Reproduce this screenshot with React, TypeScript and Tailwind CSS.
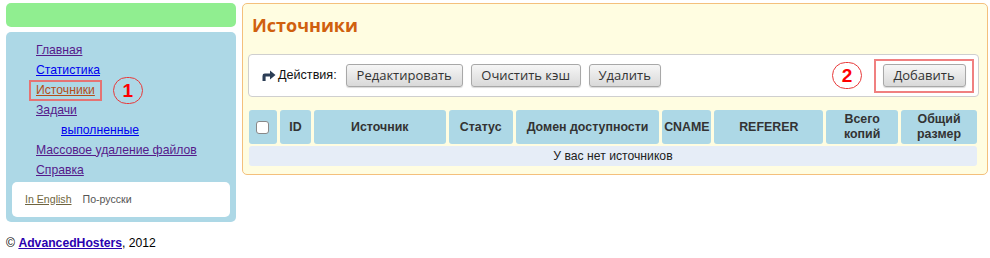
import React from "react";

const sideLinks = [
  { name: "Главная", color: "text-[#551a8b]", indent: false },
  { name: "Статистика", color: "text-[#0000ee]", indent: false },
  { name: "Источники", color: "text-[#b34d1a]", indent: false, current: true },
  { name: "Задачи", color: "text-[#551a8b]", indent: false },
  { name: "выполненные", color: "text-[#0000ee]", indent: true },
  { name: "Массовое удаление файлов", color: "text-[#551a8b]", indent: false },
  { name: "Справка", color: "text-[#551a8b]", indent: false },
];

const columns = [
  { name: "", w: "w-[28px]" },
  { name: "ID", w: "w-[31px]" },
  { name: "Источник", w: "w-[132px]" },
  { name: "Статус", w: "w-[64px]" },
  { name: "Домен доступности", w: "w-[144px]" },
  { name: "CNAME", w: "w-[49px]" },
  { name: "REFERER", w: "w-[109px]" },
  { name: "Всего копий", w: "w-[72px]" },
  { name: "Общий размер", w: "w-[76px]" },
];

const Mark = ({ n }: { n: string }) => (
  <span className="inline-flex h-[27px] w-[30px] items-center justify-center rounded-full border-[1.5px] border-[#e83a3a] text-[19px] font-bold leading-none text-[#ff0000] font-['Liberation_Sans',sans-serif]">
    {n}
  </span>
);

const Btn = ({ label, w }: { label: string; w: string }) => (
  <button
    className={`${w} h-[23px] rounded-[3px] border border-[#a8a8a8] bg-gradient-to-b from-[#f6f6f6] to-[#d9d9d9] text-[13px] leading-none text-[#333] shadow-[0_1px_1px_rgba(0,0,0,0.15)] font-['Open_Sans',sans-serif]`}
  >
    {label}
  </button>
);

const App = () => {
  return (
    <div className="h-[258px] w-[990px] bg-white font-['Liberation_Sans',Arial,sans-serif] text-[13px] text-black">
      <div className="flex gap-[6px] pl-[6px] pt-[3px]">
        {/* sidebar */}
        <div className="flex w-[230px] flex-col gap-[5px]">
          <div className="h-[24px] rounded-[5px] bg-[#90ee90]" />
          <div className="flex h-[190px] flex-col rounded-[5px] bg-[#add8e6] pb-[5px] pt-[8px]">
            <ul className="flex flex-col text-[12.2px]">
              {sideLinks.map((l) => (
                <li
                  key={l.name}
                  className={`flex h-[20px] items-center ${l.indent ? "pl-[55px]" : "pl-[30px]"}`}
                >
                  {l.current ? (
                    <>
                      <span className="-ml-[7px] inline-flex h-[21px] items-center border-2 border-[#e57373] px-[5px]">
                        <a href="#" className={`${l.color} underline`}>
                          {l.name}
                        </a>
                      </span>
                      <span className="ml-[11px]">
                        <Mark n="1" />
                      </span>
                    </>
                  ) : (
                    <a href="#" className={`${l.color} underline`}>
                      {l.name}
                    </a>
                  )}
                </li>
              ))}
            </ul>
            <div className="mx-[6px] mt-auto flex h-[35px] items-center gap-[11px] rounded-[5px] bg-white pl-[13px] text-[10.6px]">
              <a href="#" className="text-[#6f6540] underline">
                In English
              </a>
              <span className="text-[#555]">По-русски</span>
            </div>
          </div>
          <div className="mt-[7px] text-[12.2px]">
            ©{" "}
            <a href="#" className="font-bold text-[#2a00b0] underline">
              AdvancedHosters
            </a>
            , 2012
          </div>
        </div>

        {/* main */}
        <div className="flex h-[172px] w-[746px] flex-col rounded-[5px] border border-[#f4c07c] bg-[#fffde1] px-[5px] pt-[9px]">
          <h1 className="h-[24px] pl-[4px] text-[18px] font-bold leading-[24px] text-[#d0600e] font-['Open_Sans',sans-serif]">
            Источники
          </h1>
          <div className="mt-[17px] flex h-[43px] w-[731px] items-center rounded-[4px] border border-[#cfcfcf] bg-white pl-[13px] pr-[4px]">
            <svg width="14" height="11" viewBox="0 0 14 11" className="mr-[2px]">
              <path
                d="M0.5 11 V6 Q0.5 3.6 2.8 3.6 H8 V0.5 L13.5 5 L8 9.5 V6.6 H3.6 V11 Z"
                fill="#2b3d55"
              />
            </svg>
            <span className="text-[12.6px] text-[#111]">Действия:</span>
            <div className="ml-[9px] flex gap-[8px]">
              <Btn label="Редактировать" w="w-[117px]" />
              <Btn label="Очистить кэш" w="w-[110px]" />
              <Btn label="Удалить" w="w-[72px]" />
            </div>
            <div className="ml-auto flex items-center gap-[12px]">
              <Mark n="2" />
              <span className="flex h-[34px] w-[100px] items-center justify-center border-2 border-[#f08080]">
                <Btn label="Добавить" w="w-[83px]" />
              </span>
            </div>
          </div>
          <div className="mt-[13px] flex w-[729px] flex-col gap-[2px] pl-[1px]">
            <div className="flex h-[34px] gap-[3px]">
              {columns.map((c, i) => (
                <div
                  key={i}
                  className={`${c.w} flex items-center justify-center rounded-[3px] bg-[#add8e6] text-center text-[12.4px] font-bold leading-[15px] text-[#333]`}
                >
                  {i === 0 ? (
                    <span className="h-[13px] w-[13px] rounded-[3px] border border-[#888] bg-white" />
                  ) : c.name === "Всего копий" ? (
                    <span>
                      Всего
                      <br />
                      копий
                    </span>
                  ) : c.name === "Общий размер" ? (
                    <span>
                      Общий
                      <br />
                      размер
                    </span>
                  ) : (
                    c.name
                  )}
                </div>
              ))}
            </div>
            <div className="flex h-[20px] items-center justify-center rounded-[3px] bg-[#e6edf7] text-[12.2px] text-[#222]">
              У вас нет источников
            </div>
          </div>
        </div>
      </div>
    </div>
  );
};

export default App;
